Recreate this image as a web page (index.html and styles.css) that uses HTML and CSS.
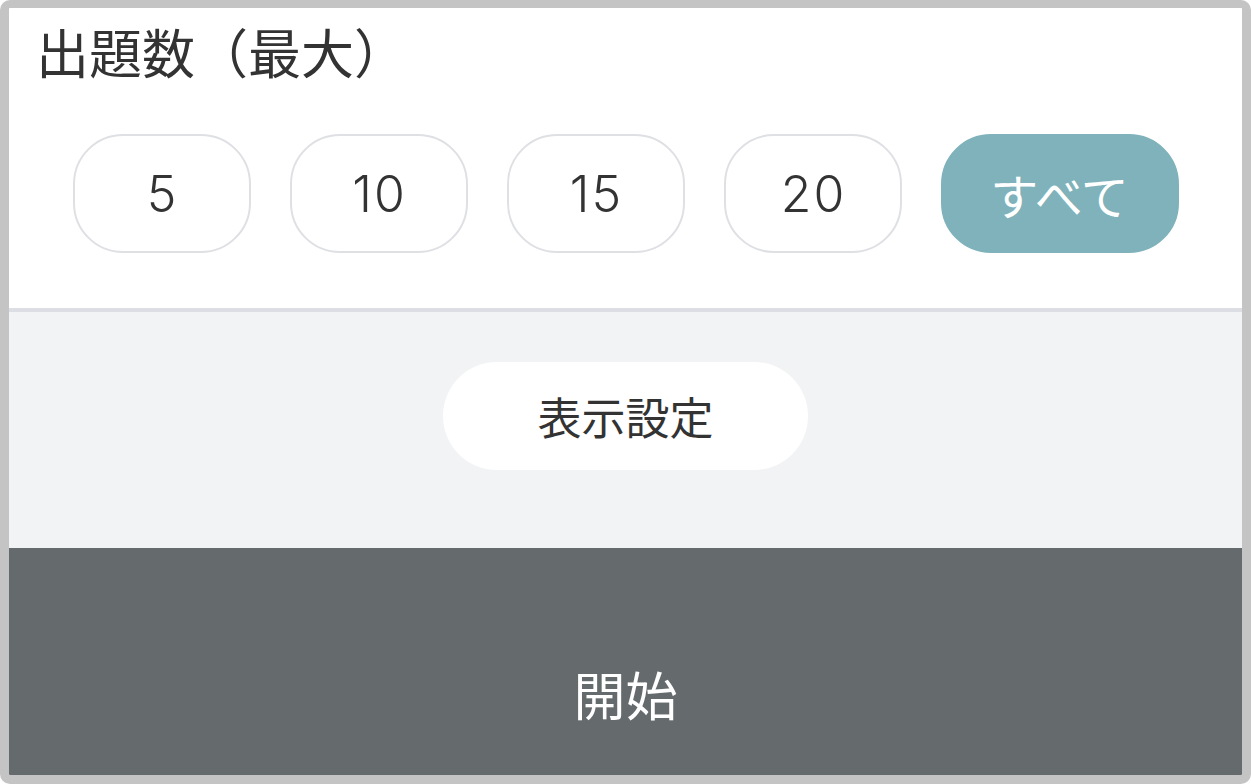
FILE: index.html
```html
<!DOCTYPE html>
<html lang="ja">
  <head>
    <meta charset="UTF-8" />
    <meta name="viewport" content="width=device-width, initial-scale=1.0" />
    <title>出題数</title>
    <link rel="stylesheet" href="styles.css">
  </head>
  <body>
    <div class="panel">
      <section class="count">
        <h2 class="count-title">出題数（最大）</h2>
        <div class="count-list">
          <button type="button" class="pill">5</button>
          <button type="button" class="pill">10</button>
          <button type="button" class="pill">15</button>
          <button type="button" class="pill">20</button>
          <button type="button" class="pill pill-wide is-active">すべて</button>
        </div>
      </section>
      <section class="display">
        <button type="button" class="display-btn">表示設定</button>
      </section>
      <button type="button" class="start">開始</button>
    </div>
  </body>
</html>
```

FILE: styles.css
```css
* {
  margin: 0;
  padding: 0;
  box-sizing: border-box;
}
body {
  width: 1251px;
  height: 784px;
  font-family: "Noto Sans CJK JP", "Noto Sans", sans-serif;
  color: #333;
  background-color: #fff;
}
button {
  font-family: inherit;
  cursor: pointer;
}
/* 바깥 회색 테두리 */
.panel {
  width: 1251px;
  height: 784px;
  border: 9px solid #c4c4c4;
  border-top-width: 8px;
  border-radius: 10px;
  overflow: hidden;
  display: flex;
  flex-flow: column;
}
.count {
  height: 304px;
  background-color: #fff;
  border-bottom: 4px solid #dddee3;
  padding: 12px 0 0 27px;
}
.count-title {
  font-size: 53px;
  font-weight: normal;
  line-height: 62px;
  color: #333;
}
.count-list {
  display: flex;
  justify-content: center;
  gap: 39px;
  margin-top: 52px;
  margin-left: -27px;
}
.pill {
  width: 178px;
  height: 119px;
  border: 2px solid #dfe0e4;
  border-radius: 50px;
  background-color: #fff;
  color: #333;
  font-family: "Inter", "Noto Sans CJK JP", sans-serif;
  font-weight: 300;
  font-size: 50px;
  letter-spacing: 2px;
  line-height: 1;
  padding: 1px 0 0 2px;
}
.pill-wide {
  width: 238px;
  font-family: "Noto Sans CJK JP", sans-serif;
  font-weight: normal;
  font-size: 48px;
  letter-spacing: 0;
  padding: 0;
}
.pill.is-active {
  background-color: #7fb2ba;
  border-color: #7fb2ba;
  color: #fff;
}
.display {
  height: 236px;
  background-color: #f2f3f5;
  display: flex;
  justify-content: center;
  padding-top: 50px;
}
.display-btn {
  width: 365px;
  height: 108px;
  border: none;
  border-radius: 54px;
  background-color: #fff;
  color: #333;
  font-size: 44px;
}
.start {
  flex: 1;
  border: none;
  background-color: #656a6c;
  color: #fff;
  font-size: 52px;
  padding-top: 64px;
}
```
